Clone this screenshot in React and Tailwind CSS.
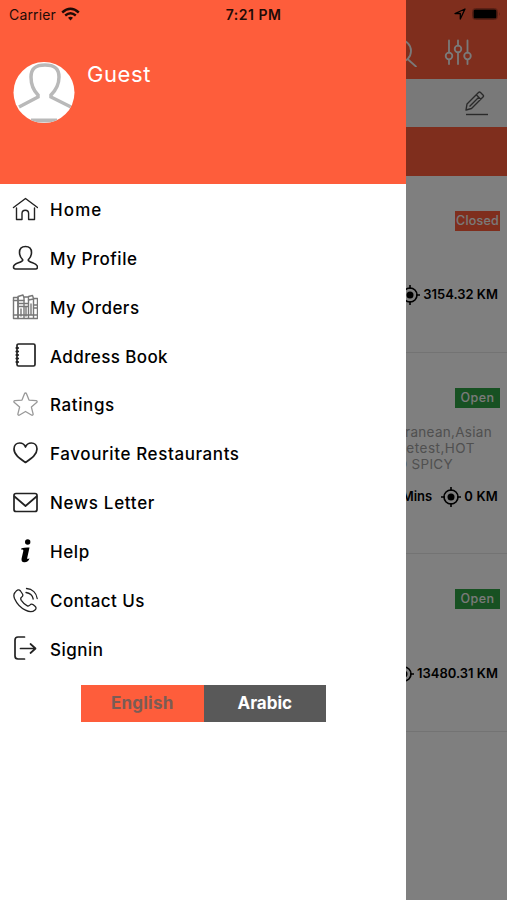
const menu = [
  { label: 'Home', icon: HomeIcon, text: 'tracking-[1.1px]' },
  { label: 'My Profile', icon: ProfileIcon, text: 'tracking-[0.5px]' },
  { label: 'My Orders', icon: OrdersIcon, text: 'tracking-[0.45px]' },
  { label: 'Address Book', icon: BookIcon, text: 'tracking-[0.4px]' },
  { label: 'Ratings', icon: StarIcon, text: 'tracking-[0.6px]' },
  { label: 'Favourite Restaurants', icon: HeartIcon, text: 'tracking-[0.6px]' },
  { label: 'News Letter', icon: MailIcon, text: 'tracking-[0.7px]' },
  { label: 'Help', icon: HelpIcon, text: 'tracking-[0.6px]' },
  { label: 'Contact Us', icon: PhoneIcon, text: 'tracking-[0.45px]' },
  { label: 'Signin', icon: SigninIcon, text: 'tracking-[0.5px]' },
]

export default function App() {
  return (
    <div className="relative h-[900px] w-[507px] overflow-hidden bg-white font-['Inter',sans-serif] text-black">
      <RestaurantList />
      <div className="absolute inset-0 bg-black/50" />
      <Drawer />
      <StatusBar />
    </div>
  )
}

function StatusBar() {
  return (
    <div className="absolute inset-x-0 top-0 grid h-7 grid-cols-3 items-center pl-[9px] pr-[6px] text-[#1f0b07]">
      <div className="flex items-center gap-[5px]">
        <span className="text-[14px] tracking-[0.15px]">Carrier</span>
        <WifiIcon />
      </div>
      <span className="pr-[3px] text-center text-[14px] font-semibold tracking-[0.5px]">7:21 PM</span>
      <div className="flex items-center justify-end gap-[6px] text-black">
        <svg width="12" height="12" viewBox="0 0 12 12" fill="none" stroke="currentColor" strokeWidth="1.3" strokeLinejoin="round">
          <path d="M11 1 1 5.500h5.300V11z" />
        </svg>
        <svg width="29" height="12" viewBox="0 0 29 12">
          <rect x="0.5" y="0.5" width="25" height="11" rx="3" fill="none" stroke="#5a2015" />
          <rect x="1.500" y="1.500" width="23" height="9" rx="1.500" fill="black" />
          <path d="M27 4v4q1.600-2 0-4" fill="#5a2015" />
        </svg>
      </div>
    </div>
  )
}

function RestaurantList() {
  return (
    <div>
      <div className="flex h-[79px] items-start justify-end gap-[27px] bg-[#fe5d3b] pr-[35px] pt-[38px] text-[#f4f4f4]">
        <svg width="29" height="29" viewBox="0 0 29 29" fill="none" stroke="currentColor" strokeWidth="1.8">
          <circle cx="12" cy="13" r="11" />
          <path d="m19.500 21 9 8" />
        </svg>
        <svg width="28" height="27" viewBox="0 0 28 27" fill="none" stroke="currentColor" strokeWidth="1.800" strokeLinecap="round">
          <path d="M5 2.500v12M5 22v4M14 2.500v5M14 14.500v11.500M23.500 2.500v12M23.500 22v4" />
          <circle cx="5" cy="18" r="3.300" />
          <circle cx="14" cy="11" r="3.300" />
          <circle cx="23.500" cy="18" r="3.300" />
        </svg>
      </div>
      <div className="flex h-[48px] items-center justify-end bg-[#f2f2f2] pr-[18px]">
        <svg width="25" height="25" viewBox="0 0 25 25" fill="none" stroke="#555" strokeWidth="1.4" strokeLinejoin="round">
          <path d="M2 19 3 13 14.500 1.500q1-1 2 0l2.500 2.500q1 1 0 2L7.500 17.500zM12.500 4l4.500 4.500M15 6 5.500 15.500" />
          <path d="M2 23.500h22" />
        </svg>
      </div>
      <div className="h-[49px] bg-[#fe5d3b]" />

      <div className="flex h-[177px] flex-col items-end border-b border-[#e6e6e6] pr-[7px] pt-[35px]">
        <Badge className="bg-[#fe5d3b] tracking-[0.2px]">Closed</Badge>
        <Distance className="mt-[54px]">3154.32 KM</Distance>
      </div>
      <div className="flex h-[201px] flex-col items-end border-b border-[#e6e6e6] pr-[7px] pt-[35px]">
        <Badge className="bg-[#2fa244] tracking-[0.5px]">Open</Badge>
        <p className="mr-[8px] mt-[16px] w-[160px] text-[13.5px] leading-4 tracking-[0.3px] text-[#a0a0a0]">
          <span className="block whitespace-nowrap text-right">Mediterranean,Asian</span>
          <span className="mr-[17px] block whitespace-nowrap text-right tracking-[0.5px]">Food,etest,HOT</span>
          <span className="mr-[39px] block whitespace-nowrap text-right">AND SPICY</span>
        </p>
        <div className="mt-[15px] flex items-center gap-[9px] text-[13px] font-semibold">
          <span>30 Mins</span>
          <Distance className="tracking-[0.2px]">0 KM</Distance>
        </div>
      </div>
      <div className="flex h-[178px] flex-col items-end border-b border-[#e6e6e6] pr-[7px] pt-[35px]">
        <Badge className="bg-[#2fa244] tracking-[0.5px]">Open</Badge>
        <Distance className="mt-[55px]">13480.31 KM</Distance>
      </div>
    </div>
  )
}

function Badge({ className, children }) {
  return (
    <span className={`flex h-5 w-[45px] shrink-0 items-center justify-center text-[12.5px] font-medium text-[#f4f4f4] ${className}`}>
      {children}
    </span>
  )
}

function Distance({ className = '', children }) {
  return (
    <div className={`flex h-5 shrink-0 items-center gap-[3px] pr-[2px] text-[13px] font-semibold ${className}`}>
      <svg width="20" height="20" viewBox="0 0 20 20" fill="none" stroke="black" strokeWidth="1.6">
        <circle cx="10" cy="10" r="7" />
        <circle cx="10" cy="10" r="3.5" fill="black" stroke="none" />
        <path d="M10 0v4M10 16v4M0 10h4M16 10h4" />
      </svg>
      <span>{children}</span>
    </div>
  )
}

function Drawer() {
  return (
    <div className="absolute inset-y-0 left-0 w-[406px] bg-white">
      <div className="flex h-[184px] items-start gap-[12.5px] bg-[#fe5d3b] pl-[12.5px] pt-[61px]">
        <svg width="62" height="62" viewBox="0 0 62 62">
          <clipPath id="avatar">
            <circle cx="31" cy="31.500" r="30.500" />
          </clipPath>
          <g clipPath="url(#avatar)">
            <rect width="62" height="62" fill="white" />
            <path
              d="M6 46 25 36v-2C20 29 18 23 18 16 18 7 23 4 32 4s14 3 14 12c0 7-3 13-8 18v2l20 10"
              fill="none"
              stroke="#b9b9b9"
              strokeWidth="3.5"
            />
            <path d="M18 59.500h26" stroke="#b9b9b9" strokeWidth="4" />
          </g>
        </svg>
        <span className="-mt-px text-[22px] leading-7 tracking-[0.6px] text-white">Guest</span>
      </div>
      <ul className="pt-[2.4px]">
        {menu.map(({ label, icon: Icon, text }) => (
          <li key={label} className="flex h-[48.85px] items-center gap-[12px] pl-[12px]">
            <Icon />
            <span className={`text-[17px] font-medium ${text}`}>{label}</span>
          </li>
        ))}
      </ul>
      <div className="ml-[81px] mt-[10px] flex h-[37px] w-[245px] text-[17px] font-bold">
        <div className="flex flex-1 items-center justify-center bg-[#fe5d3b] tracking-[0.2px] text-[#7b5c55]">English</div>
        <div className="flex flex-1 items-center justify-center bg-[#595959] text-white">Arabic</div>
      </div>
    </div>
  )
}

// Every menu glyph shares a 26px box
function Glyph({ children, color = '#222', width = 1.4 }) {
  return (
    <svg
      className="-mt-[4px] shrink-0"
      width="26"
      height="26"
      viewBox="0 0 26 26"
      fill="none"
      stroke={color}
      strokeWidth={width}
      strokeLinecap="round"
      strokeLinejoin="round"
    >
      {children}
    </svg>
  )
}

function HomeIcon() {
  return (
    <Glyph>
      <path d="M1.500 11.500 13.500 2.500l12 9" />
      <path d="M4.500 12v11.500h5.500v-6a3.300 3.300 0 0 1 6.600 0v6h5.900V12" />
    </Glyph>
  )
}

function ProfileIcon() {
  return (
    <Glyph width={1.6}>
      <path d="M13.500 1.500c-4 0-6 2.500-6 6 0 3 1 5 3 7 .6 1-.2 1.600-1.500 2.200C5 18.500 1.500 19 1.500 22c0 1.500.5 2 2 2h20c1.500 0 2-.5 2-2 0-3-3.500-3.500-7.500-5.300-1.300-.6-2.100-1.200-1.500-2.200 2-2 3-4 3-7 0-3.500-2-6-6-6z" />
    </Glyph>
  )
}

function OrdersIcon() {
  return (
    <Glyph color="#777" width={1.4}>
      <rect x="1.500" y="3.500" width="4.500" height="21" />
      <path d="M6 2.500 11 1l1 3v20.500H6zM12 3h4.500v21.500H12zM16.500 2.500l4-1 1 3v20h-5zM21.500 4.500h4v20h-4z" />
      <path d="M1.500 6.500H12M1.500 21H25.500M6 9.500h10M6 12.500h10M16.500 6l5-1M21.500 11h4M21.500 14h4M9 15v7M14 13v9M19 10v10" />
    </Glyph>
  )
}

function BookIcon() {
  return (
    <Glyph width={1.7}>
      <rect x="5" y="2" width="18" height="22" rx="1.500" />
      <path d="M4.500 6h1.500M4.500 9.500h1.500M4.500 13h1.500M4.500 16.500h1.500M4.500 20h1.500" strokeWidth="2.200" />
    </Glyph>
  )
}

function StarIcon() {
  return (
    <Glyph color="#999" width={1.3}>
      <path d="M13.500 2c.5 0 .8.300 1 .8l2.500 6.300 7 .6c1.200.1 1.500 1.200.6 1.900l-5.200 4.500 1.700 6.700c.2 1.200-.7 1.800-1.700 1.200l-5.900-3.500L7.600 24c-1 .6-1.900 0-1.700-1.200l1.700-6.700-5.200-4.500c-.9-.7-.6-1.800.6-1.900l7-.6 2.500-6.300c.2-.5.500-.8 1-.8z" />
    </Glyph>
  )
}

function HeartIcon() {
  return (
    <Glyph width={1.7}>
      <path d="M13.500 22.500C7 18 2 14.500 2 9c0-3.500 2.500-6 5.700-6 2.500 0 4.800 1.500 5.800 4 1-2.500 3.300-4 5.800-4C22.500 3 25 5.500 25 9c0 5.500-5 9-11.500 13.500z" />
    </Glyph>
  )
}

function MailIcon() {
  return (
    <Glyph width={1.7}>
      <rect x="2" y="4.500" width="23" height="18" rx="2" />
      <path d="m2.500 7.500 11 9.500 11-9.500" />
    </Glyph>
  )
}

function HelpIcon() {
  return (
    <Glyph color="none">
      <circle cx="15.700" cy="4" r="2.700" fill="black" />
      <path d="M9.500 10.300c2.500-.8 5-1 8-.8l-2.300 10.500c-.2 1.300 1 1 2.300.2-.5 2.800-3 4.300-5.300 4.100-2.200-.2-3-1.500-2.600-3.800l1.700-7.500c.2-1.200-.3-1.500-2.300-1.500z" fill="black" />
    </Glyph>
  )
}

function PhoneIcon() {
  return (
    <Glyph width={1.3}>
      <path d="M3 5.500c2-3 4-3.500 5.500-1.500l2 3c.8 1.500.2 2.500-1 3.300-1 .7-1 1.700-.2 3 1.700 2.500 3.700 4.500 6 5.500 1 .5 1.700.2 2.500-.7 1-1.200 2.200-1.300 3.500-.3l2 1.700c1 1 1 2.300-.3 3.500-2.500 2.300-5.500 2.300-9.500.2C8 20.500 4.500 16 2.500 11.500c-1-2.500-.8-4.500.5-6z" />
      <path d="M14.500 1.500c6 .5 10 4.500 10.700 10M14 5.500c4 .5 6.500 3 7.200 6.500" />
    </Glyph>
  )
}

function SigninIcon() {
  return (
    <Glyph width={1.7}>
      <path d="M12.500 2H6Q3 2 3 5v16Q3 24 6 24h6.500" />
      <path d="M8.500 13.500H23.500M18.500 9l5 4.500-5 4.500" />
    </Glyph>
  )
}

function WifiIcon() {
  return (
    <svg width="19" height="14" viewBox="0 0 19 14" fill="none" stroke="currentColor" strokeWidth="2.400">
      <path d="M1.200 5.500q8.300-7.500 16.600 0M4.200 8.500q5.300-4.500 10.600 0" />
      <path d="m9.500 13.500-2.500-2.700q2.500-2 5 0z" fill="currentColor" stroke="none" />
    </svg>
  )
}
